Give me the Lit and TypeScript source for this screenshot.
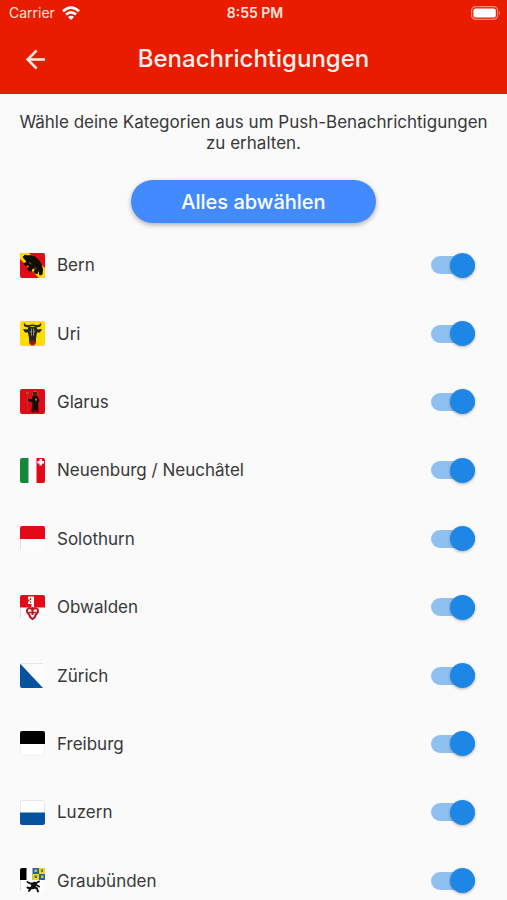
import { LitElement, html, svg, css, type SVGTemplateResult } from "lit";
import { customElement, property, state } from "lit/decorators.js";

interface Canton {
  id: string;
  name: string;
  flag: SVGTemplateResult;
}

const RED = "#e30a17";
const YELLOW = "#fddc04";
const BLUE = "#05539f";

const cantons: Canton[] = [
  {
    id: "be",
    name: "Bern",
    flag: svg`
      <rect width="50" height="50" fill="${RED}"/>
      <path d="M0 0H18L50 30V50H38L0 12Z" fill="${YELLOW}"/>
      <path d="M6 8L10 4L14 6L21 5L30 8L37 14L42 22L45 32L44 43L39 44L39 38L36 35L35 41L29 40L28 36L31 34L28 30L24 31L23 36L17 35L15 31L19 28L16 24L11 25L8 21L14 18L11 14Z" fill="#120c05" stroke="#120c05" stroke-width="2" stroke-linejoin="round"/>
      <path d="M18 19L23 22M29 29L33 31" stroke="#8c6d12" stroke-width="2"/>`,
  },
  {
    id: "ur",
    name: "Uri",
    flag: svg`
      <rect width="50" height="50" fill="${YELLOW}"/>
      <path d="M8 3C6 9 10 14 17 12L25 10L33 12C40 14 44 9 42 3C41 7 36 9 32 8L25 7L18 8C14 9 9 7 8 3Z" fill="#25251f"/>
      <path d="M17 12H33L35 17L44 16L40 23L34 23L32 35L32 43H18L18 35L16 23L10 23L6 16L15 17Z" fill="#25251f"/>
      <path d="M19 20L23 23M31 20L27 23M23 15V29M27 15V29" stroke="#89908e" stroke-width="2"/>
      <path d="M18 40H32V44L28 49H22L18 44Z" fill="#b51d16"/>
      <ellipse cx="25" cy="41" rx="5" ry="3" fill="none" stroke="#40231d" stroke-width="2"/>`,
  },
  {
    id: "gl",
    name: "Glarus",
    flag: svg`
      <rect width="50" height="50" fill="${RED}"/>
      <path d="M15 6V46" stroke="#8b451c" stroke-width="2"/>
      <circle cx="15" cy="8" r="2" fill="none" stroke="#a86a20" stroke-width="2"/>
      <circle cx="30" cy="9" r="5" fill="#a8701c"/>
      <path d="M25 14L35 14L39 23L36 29L37 43H23L25 27L17 24L16 20L24 20Z" fill="#130d0a"/>
      <path d="M26 6H34V12L30 15L26 12Z" fill="#3b2015"/>
      <path d="M30 19H34V23H30Z" fill="#9b7a2a"/>
      <path d="M23 45H29M32 45H38" stroke="#130d0a" stroke-width="3"/>`,
  },
  {
    id: "ne",
    name: "Neuenburg / Neuchâtel",
    flag: svg`
      <rect width="50" height="50" fill="#fff"/>
      <rect width="17" height="50" fill="#15883b"/>
      <rect x="33" width="17" height="50" fill="${RED}"/>
      <path d="M39 2H44V6H48V11H44V15H39V11H35V6H39Z" fill="#fff"/>`,
  },
  {
    id: "so",
    name: "Solothurn",
    flag: svg`
      <rect width="50" height="50" fill="#fcfcfc"/>
      <rect width="50" height="26" fill="${RED}"/>
      <path d="M1 26V48" stroke="#dedede" stroke-width="2"/>`,
  },
  {
    id: "ow",
    name: "Obwalden",
    flag: svg`
      <rect width="50" height="50" fill="#fcfcfc"/>
      <rect width="50" height="25" fill="${RED}"/>
      <path d="M1 25V46" stroke="#dedede" stroke-width="2"/>
      <path d="M16 3H28V25H23V18H16V13H19V9H16Z" fill="#fff"/>
      <path d="M21 6V10M21 13V16" stroke="${RED}" stroke-width="2"/>
      <path d="M25 24V40" stroke="#c20f1c" stroke-width="4"/>
      <path d="M25 29C20 24 13 27 14 33C15 38 19 38 19 41C20 46 23 47 25 48C27 47 30 46 31 41C31 38 35 38 36 33C37 27 30 24 25 29Z" fill="none" stroke="#c20f1c" stroke-width="4"/>
      <path d="M17 35H33" stroke="#c20f1c" stroke-width="3"/>`,
  },
  {
    id: "zh",
    name: "Zürich",
    flag: svg`
      <rect width="50" height="50" fill="#fcfcfc"/>
      <path d="M0 1L46 50H0Z" fill="${BLUE}"/>
      <path d="M2 1H46" stroke="#e6e6e6" stroke-width="2"/>`,
  },
  {
    id: "fr",
    name: "Freiburg",
    flag: svg`
      <rect width="50" height="50" fill="#fff"/>
      <rect width="50" height="26" fill="#000"/>
      <path d="M1 26V46Q1 49 4 49H46Q49 49 49 46V26" fill="none" stroke="#f0f0f0" stroke-width="2"/>`,
  },
  {
    id: "lu",
    name: "Luzern",
    flag: svg`
      <rect width="50" height="50" fill="#fff"/>
      <path d="M1 25V4Q1 1 4 1H46Q49 1 49 4V25" fill="none" stroke="#e8e8e8" stroke-width="2"/>
      <rect y="25" width="50" height="25" fill="${BLUE}"/>`,
  },
  {
    id: "gr",
    name: "Graubünden",
    flag: svg`
      <rect width="50" height="50" fill="#fcfcfc"/>
      <rect width="13" height="24" fill="#000"/>
      <path d="M1 24V46" stroke="#dedede" stroke-width="2"/>
      <rect x="25" width="25" height="24" fill="#2765a0"/>
      <path d="M38 0H50V12H38ZM25 12H38V24H25Z" fill="#f0d51b"/>
      <path d="M29 3H34V8H29ZM42 15H47V20H42Z" fill="#d2c43b"/>
      <path d="M42 3H46V8H42ZM29 15H34V20H29Z" fill="#4d7a79"/>
      <g fill="none" stroke="#111" stroke-linecap="round" stroke-linejoin="round">
        <path d="M15 28L20 31H25" stroke-width="4"/>
        <path d="M24 34L31 31L38 27M31 33L38 37" stroke-width="4"/>
        <path d="M29 32L26 38" stroke-width="9"/>
        <path d="M25 38L19 41L15 39M28 38L34 41L36 47M22 41L18 46" stroke-width="4"/>
      </g>`,
  },
];

@customElement("canton-row")
export class CantonRow extends LitElement {
  @property({ attribute: false }) canton!: Canton;
  @property({ type: Boolean }) active = false;

  static styles = css`
    :host {
      display: block;
    }
    .row {
      display: flex;
      align-items: center;
      gap: 12px;
      height: 100%;
      cursor: pointer;
    }
    .flag {
      flex: none;
      width: 25px;
      height: 25px;
      border-radius: 2px;
    }
    .name {
      flex: 1;
      font-size: 17px;
      line-height: 24px;
    }
    .switch {
      appearance: none;
      flex: none;
      display: flex;
      align-items: center;
      width: 44px;
      height: 18px;
      margin: 0;
      border-radius: 9px;
      background: #bdbdbd;
      cursor: pointer;
    }
    .switch::before {
      content: "";
      width: 25px;
      height: 25px;
      flex: none;
      border-radius: 50%;
      background: #fafafa;
      box-shadow: 0 1px 3px rgba(0, 0, 0, 0.3);
    }
    .switch:checked {
      justify-content: flex-end;
      background: #8ec1f0;
    }
    .switch:checked::before {
      background: #1e86e5;
    }
  `;

  private onChange(e: Event) {
    const on = (e.target as HTMLInputElement).checked;
    this.dispatchEvent(new CustomEvent("canton-toggle", { detail: { id: this.canton.id, on } }));
  }

  render() {
    return html`
      <label class="row">
        <svg class="flag" viewBox="0 0 50 50" aria-hidden="true">${this.canton.flag}</svg>
        <span class="name">${this.canton.name}</span>
        <input class="switch" type="checkbox" role="switch" .checked=${this.active} @change=${this.onChange} />
      </label>
    `;
  }
}

@customElement("app-root")
export class AppRoot extends LitElement {
  @state() private selected = new Set(cantons.map((c) => c.id));

  static styles = css`
    :host {
      display: block;
      height: 100vh;
      overflow: hidden auto;
      scrollbar-width: none;
      background: #fafafa;
      color: #383838;
      font-family: Inter, "Liberation Sans", sans-serif;
    }
    .top {
      padding-bottom: 2px;
      background: #e91c00;
      color: #fff;
    }
    .status {
      display: grid;
      grid-template-columns: 1fr auto 1fr;
      align-items: center;
      height: 26px;
      padding: 0 6px 0 9px;
      font-size: 14px;
      line-height: 20px;
      color: #ffe4df;
    }
    .carrier {
      display: flex;
      align-items: center;
      gap: 7px;
    }
    .wifi {
      width: 18px;
      height: 14px;
    }
    .time {
      font-size: 14px;
      font-weight: 600;
    }
    .battery {
      justify-self: end;
      width: 30px;
      height: 14px;
    }
    .bar {
      display: grid;
      grid-template-columns: 48px 1fr 48px;
      align-items: center;
      height: 66px;
      padding: 0 12px;
    }
    .back {
      display: grid;
      place-items: center;
      width: 48px;
      height: 48px;
      padding: 0;
      border: 0;
      background: none;
      color: #ffece8;
      cursor: pointer;
    }
    .arrow {
      width: 24px;
      height: 24px;
    }
    .title {
      margin: 0;
      text-align: center;
      font-size: 24px;
      line-height: 32px;
      font-weight: 500;
      color: #fff0ed;
    }
    .intro {
      margin: 0;
      padding: 18px 16px 0;
      text-align: center;
      font-size: 17px;
      line-height: 21px;
    }
    .actions {
      display: flex;
      justify-content: center;
      padding-top: 26px;
    }
    .toggle-all {
      width: 245px;
      height: 43px;
      padding: 0;
      border: 0;
      border-radius: 22px;
      background: #448aff;
      color: #fff;
      font: 500 20px/24px Inter, "Liberation Sans", sans-serif;
      box-shadow: 0 2px 5px rgba(0, 0, 0, 0.3);
      cursor: pointer;
    }
    .list {
      display: grid;
      grid-auto-rows: 1fr;
      min-height: calc(100vh - 216px);
      margin: 0;
      padding: 8px 32px 0 20px;
      box-sizing: content-box;
      list-style: none;
    }
    .item {
      display: grid;
    }
  `;

  private toggle(id: string, on: boolean) {
    const next = new Set(this.selected);
    if (on) next.add(id);
    else next.delete(id);
    this.selected = next;
  }

  private toggleAll() {
    this.selected = this.selected.size ? new Set() : new Set(cantons.map((c) => c.id));
  }

  render() {
    return html`
      <header class="top">
        <div class="status">
          <div class="carrier">
            <span>Carrier</span>
            <svg class="wifi" viewBox="0 0 18 14" aria-hidden="true">
              <g fill="none" stroke="#fff" stroke-width="2.6">
                <path d="M1 5.2Q9 -2 17 5.2" />
                <path d="M4 8.6Q9 4.2 14 8.6" />
              </g>
              <path d="M6 11Q9 8.6 12 11L9 14Z" fill="#fff" />
            </svg>
          </div>
          <span class="time">8:55 PM</span>
          <svg class="battery" viewBox="0 0 30 14" role="img" aria-label="Battery full">
            <rect x="0.6" y="0.6" width="26" height="12.8" rx="4" fill="none" stroke="#f58b7b" stroke-width="1.2" />
            <rect x="2.4" y="2.4" width="22.4" height="9.2" rx="2.2" fill="#fff" />
            <path d="M28 5Q30 7 28 9Z" fill="#f58b7b" />
          </svg>
        </div>
        <div class="bar">
          <button class="back" aria-label="Zurück">
            <svg class="arrow" viewBox="0 0 24 24" fill="none" stroke="currentColor" stroke-width="2.5" aria-hidden="true">
              <path d="M21 12.5H4M12.6 3.5L3.6 12.5L12.6 21.5" />
            </svg>
          </button>
          <h1 class="title">Benachrichtigungen</h1>
        </div>
      </header>
      <main>
        <p class="intro">Wähle deine Kategorien aus um Push-Benachrichtigungen zu erhalten.</p>
        <div class="actions">
          <button class="toggle-all" @click=${this.toggleAll}>
            ${this.selected.size ? "Alles abwählen" : "Alles auswählen"}
          </button>
        </div>
        <ul class="list">
          ${cantons.map(
            (c) => html`
              <li class="item">
                <canton-row
                  .canton=${c}
                  .active=${this.selected.has(c.id)}
                  @canton-toggle=${(e: CustomEvent) => this.toggle(e.detail.id, e.detail.on)}
                ></canton-row>
              </li>
            `,
          )}
        </ul>
      </main>
    `;
  }
}
